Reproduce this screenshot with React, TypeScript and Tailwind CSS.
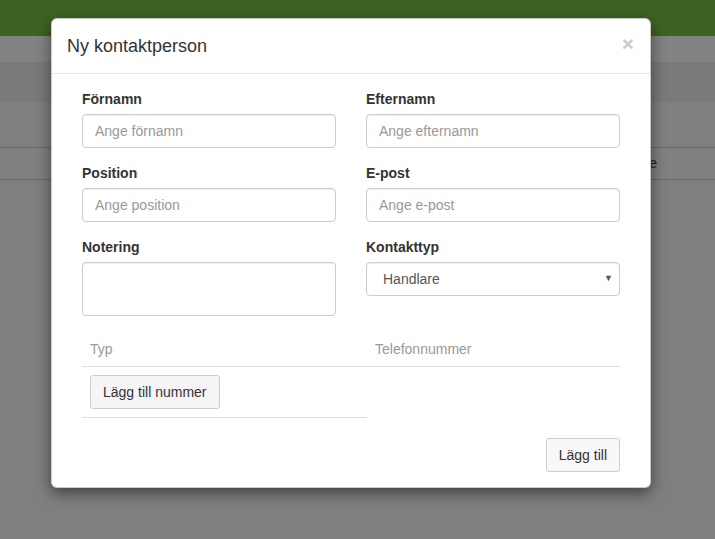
import React from "react";

const font = { fontFamily: '"Liberation Sans", Arial, sans-serif' };

function Field({ label, placeholder }: { label: string; placeholder: string }) {
  return (
    <div className="mb-[15px]">
      <label className="block mb-[5px] text-[14px] leading-[20px] font-bold text-[#333]">{label}</label>
      <input
        placeholder={placeholder}
        className="block w-full h-[34px] px-[12px] py-[6px] text-[14px] text-[#555] border border-[#ccc] rounded-[4px] bg-white shadow-[inset_0_1px_1px_rgba(0,0,0,0.075)] placeholder:text-[#999] outline-none"
      />
    </div>
  );
}

export default function App() {
  return (
    <div className="relative w-[715px] h-[539px] overflow-hidden bg-[#7f7f7f] text-[14px]" style={font}>
      {/* dimmed background page (behind the modal backdrop) */}
      <div className="flex flex-col">
        <div className="h-[36px] bg-[#3e6224]" />
        <div className="h-[26px] bg-[#838383]" />
        <div className="h-[40px] bg-[#7a7a7a]" />
        <div className="h-[46px] bg-[#808080] border-b border-[#666]" />
        <div className="h-[32px] bg-[#808080] border-b border-[#666] flex items-center justify-end pr-[58px] text-[#1a1a1a] text-[14px]">
          e
        </div>
      </div>
      {/* modal */}
      <div className="absolute left-[51px] top-[18px] w-[600px] bg-white rounded-[6px] shadow-[0_5px_15px_rgba(0,0,0,0.5)] border border-black/20">
        <div className="flex items-start justify-between px-[15px] pt-[14px] pb-[14px] border-b border-[#e5e5e5]">
          <h4 className="text-[18px] leading-[26px] text-[#333]">Ny kontaktperson</h4>
          <button className="text-[21px] leading-[21px] font-bold text-black opacity-20 mt-[0px] mr-[1px]">×</button>
        </div>
        <div className="p-[15px]">
          <div className="grid grid-cols-2">
            <div className="px-[15px]">
              <Field label="Förnamn" placeholder="Ange förnamn" />
              <Field label="Position" placeholder="Ange position" />
              <div className="mb-[15px]">
                <label className="block mb-[5px] text-[14px] leading-[20px] font-bold text-[#333]">Notering</label>
                <textarea className="block w-full h-[54px] px-[12px] py-[6px] text-[14px] border border-[#ccc] rounded-[4px] resize-none outline-none shadow-[inset_0_1px_1px_rgba(0,0,0,0.075)]" />
              </div>
            </div>
            <div className="px-[15px]">
              <Field label="Efternamn" placeholder="Ange efternamn" />
              <Field label="E-post" placeholder="Ange e-post" />
              <div className="mb-[15px]">
                <label className="block mb-[5px] text-[14px] leading-[20px] font-bold text-[#333]">Kontakttyp</label>
                <div className="relative h-[34px] border border-[#ccc] rounded-[4px] flex items-center pl-[16px] text-[14px] text-[#555] shadow-[inset_0_1px_1px_rgba(0,0,0,0.075)]">
                  Handlare
                  <span className="absolute right-[6px] top-[9px] text-[9px] text-[#555]">▼</span>
                </div>
              </div>
            </div>
          </div>
          <div className="px-[15px]">
            <table className="w-full border-collapse mb-[20px]">
              <thead>
                <tr className="border-b border-[#ddd]">
                  <th className="w-[285px] text-left font-normal text-[#999] px-[8px] pt-[8px] pb-[7px] leading-[20px]">Typ</th>
                  <th className="text-left font-normal text-[#999] px-[8px] pt-[8px] pb-[7px] leading-[20px]">Telefonnummer</th>
                </tr>
              </thead>
              <tbody>
                <tr>
                  <td className="p-[8px] border-b border-[#ddd]">
                    <button className="h-[34px] px-[12px] text-[14px] text-[#333] bg-[#f5f5f5] border border-[#ccc] rounded-[3px]">
                      Lägg till nummer
                    </button>
                  </td>
                  <td />
                </tr>
              </tbody>
            </table>
            <div className="flex justify-end">
              <button className="h-[34px] px-[12px] text-[14px] text-[#333] bg-[#f8f8f8] border border-[#ccc] rounded-[3px]">
                Lägg till
              </button>
            </div>
          </div>
        </div>
      </div>
    </div>
  );
}
